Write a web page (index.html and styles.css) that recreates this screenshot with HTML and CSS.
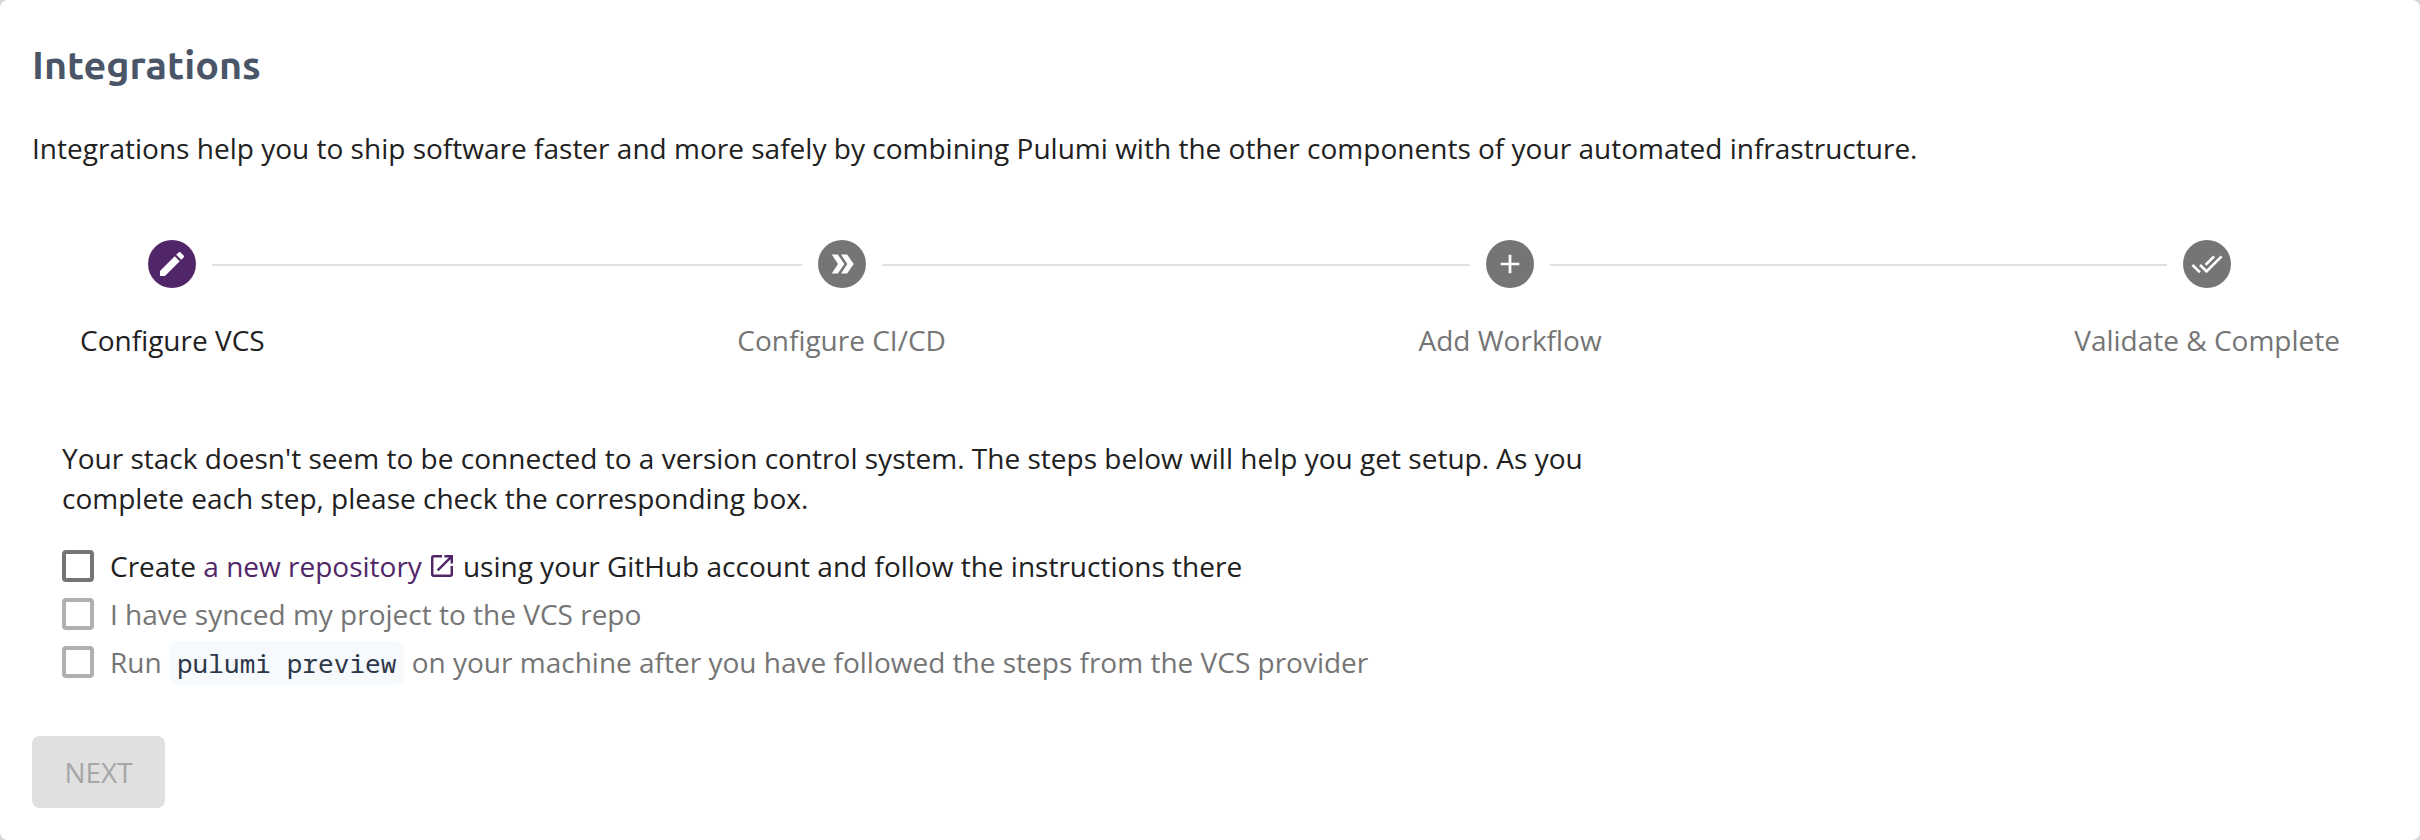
FILE: index.html
```html
<!DOCTYPE html>
<html lang="en">
<head>
<meta charset="utf-8">
<title>Integrations</title>
<link rel="stylesheet" href="styles.css">
</head>
<body>
<main class="card">
  <h2 class="title">Integrations</h2>
  <p class="intro">Integrations help you to ship software faster and more safely by combining Pulumi with the other components of your automated infrastructure.</p>

  <div class="stepper">
    <div class="step active">
      <div class="track">
        <i class="line hidden"></i>
        <span class="dot"><svg viewBox="0 0 24 24" width="32" height="32"><path d="M3 17.25V21h3.75L17.81 9.94l-3.75-3.75L3 17.25zM20.71 7.04c.39-.39.39-1.02 0-1.41l-2.34-2.34c-.39-.39-1.02-.39-1.41 0l-1.83 1.83 3.75 3.75 1.83-1.83z"/></svg></span>
        <i class="line"></i>
      </div>
      <div class="label">Configure VCS</div>
    </div>
    <div class="connector"></div>
    <div class="step">
      <div class="track">
        <i class="line"></i>
        <span class="dot"><svg viewBox="0 0 24 24" width="32" height="32"><path d="M4.300 4.800H8.800L13.800 12l-5 7.200H4.300L9 12z"/><path d="M11.300 4.800H15.800L20.800 12l-5 7.200H11.300L16 12z"/></svg></span>
        <i class="line"></i>
      </div>
      <div class="label">Configure CI/CD</div>
    </div>
    <div class="connector"></div>
    <div class="step">
      <div class="track">
        <i class="line"></i>
        <span class="dot"><svg viewBox="0 0 24 24" width="32" height="32"><path d="M19 13h-6v6h-2v-6H5v-2h6V5h2v6h6v2z"/></svg></span>
        <i class="line"></i>
      </div>
      <div class="label">Add Workflow</div>
    </div>
    <div class="connector"></div>
    <div class="step">
      <div class="track">
        <i class="line"></i>
        <span class="dot"><svg viewBox="0 0 24 24" width="32" height="32"><path d="M18 7l-1.410-1.410-6.340 6.340 1.410 1.410L18 7zm4.240-1.410L11.660 16.170 7.480 12l-1.410 1.410L11.660 19l12-12-1.420-1.410zM.41 13.410L6 19l1.410-1.410L1.830 12 .41 13.410z"/></svg></span>
        <i class="line hidden"></i>
      </div>
      <div class="label">Validate &amp; Complete</div>
    </div>
  </div>

  <section class="content">
    <p class="message">Your stack doesn't seem to be connected to a version control system. The steps below will help you get setup. As you<br>complete each step, please check the corresponding box.</p>
    <ul class="checks">
      <li class="check"><span class="box"></span><span>Create <a class="link">a new repository<svg class="open" viewBox="3 3 18 18" width="22" height="22"><path d="M19 19H5V5h7V3H5c-1.110 0-2 .9-2 2v14c0 1.100.89 2 2 2h14c1.100 0 2-.9 2-2v-7h-2v7zM14 3v2h3.590l-9.830 9.830 1.410 1.410L19 6.410V10h2V3h-7z"/></svg></a><span class="after">using your GitHub account and follow the instructions there</span></span></li>
      <li class="check disabled"><span class="box"></span><span>I have synced my project to the VCS repo</span></li>
      <li class="check disabled"><span class="box"></span><span class="command">Run <code class="code">pulumi preview</code> on your machine after you have followed the steps from the VCS provider</span></li>
    </ul>
  </section>

  <button class="next" disabled>NEXT</button>
</main>
</body>
</html>
```
FILE: styles.css
```css
* { box-sizing: border-box; }
body {
  margin: 0;
  background: #d4d6d8;
  font-family: "Open Sans", "Noto Sans", sans-serif;
  font-size: 28px;
  line-height: 40px;
  color: #212121;
}
.card {
  height: 840px;
  padding: 40px 32px 0;
  background: #fff;
  border-radius: 8px;
}
.title {
  margin: 0;
  font-family: Ubuntu, "Noto Sans", sans-serif;
  font-size: 39.600px;
  font-weight: 700;
  line-height: 48px;
  color: #4a5568;
}
.intro { margin: 40px 0 0; white-space: nowrap; letter-spacing: 0.010px; }
.stepper { display: flex; margin-top: 72px; }
.step { flex: none; }
.track { display: flex; align-items: center; gap: 16px; height: 48px; }
.line, .connector { height: 2px; background: #e0e0e0; }
.line { flex: 1; margin-top: 2px; }
.hidden { visibility: hidden; }
.connector { flex: 1; margin-top: 24px; }
.dot {
  display: flex;
  align-items: center;
  justify-content: center;
  width: 48px;
  height: 48px;
  border-radius: 50%;
  background: #757575;
}
.dot svg { fill: #fff; }
.active .dot { background: #512668; }
.label { padding: 32px 48px 0; color: #757575; white-space: nowrap; }
.active .label { color: #212121; }
.content { margin: 78px 0 0 30px; }
.message { margin: 0; white-space: nowrap; letter-spacing: 0.010px; }
.checks { margin: 24px 0 0; padding: 0; list-style: none; }
.check { display: flex; align-items: center; gap: 16px; height: 48px; white-space: nowrap; }
.box { width: 32px; height: 32px; border: 4px solid #757575; border-radius: 4px; }
.disabled { color: #757575; }
.disabled .box { border-color: #b0b0b0; }
.link { color: #512668; }
.open { margin-left: 9px; fill: #512668; }
.after { margin-left: 10px; }
.code {
  padding: 4px 8px;
  border-radius: 8px;
  background: #f7fafc;
  font-family: "Noto Sans Mono", "DejaVu Sans Mono", monospace;
  font-size: 26px;
  letter-spacing: 0.080px;
  color: #2d3748;
}
.next {
  display: block;
  width: 133px;
  height: 72px;
  margin-top: 50px;
  padding: 0;
  border: 0;
  border-radius: 8px;
  background: #e0e0e0;
  color: #a6a6a6;
  font: inherit;
}
```
